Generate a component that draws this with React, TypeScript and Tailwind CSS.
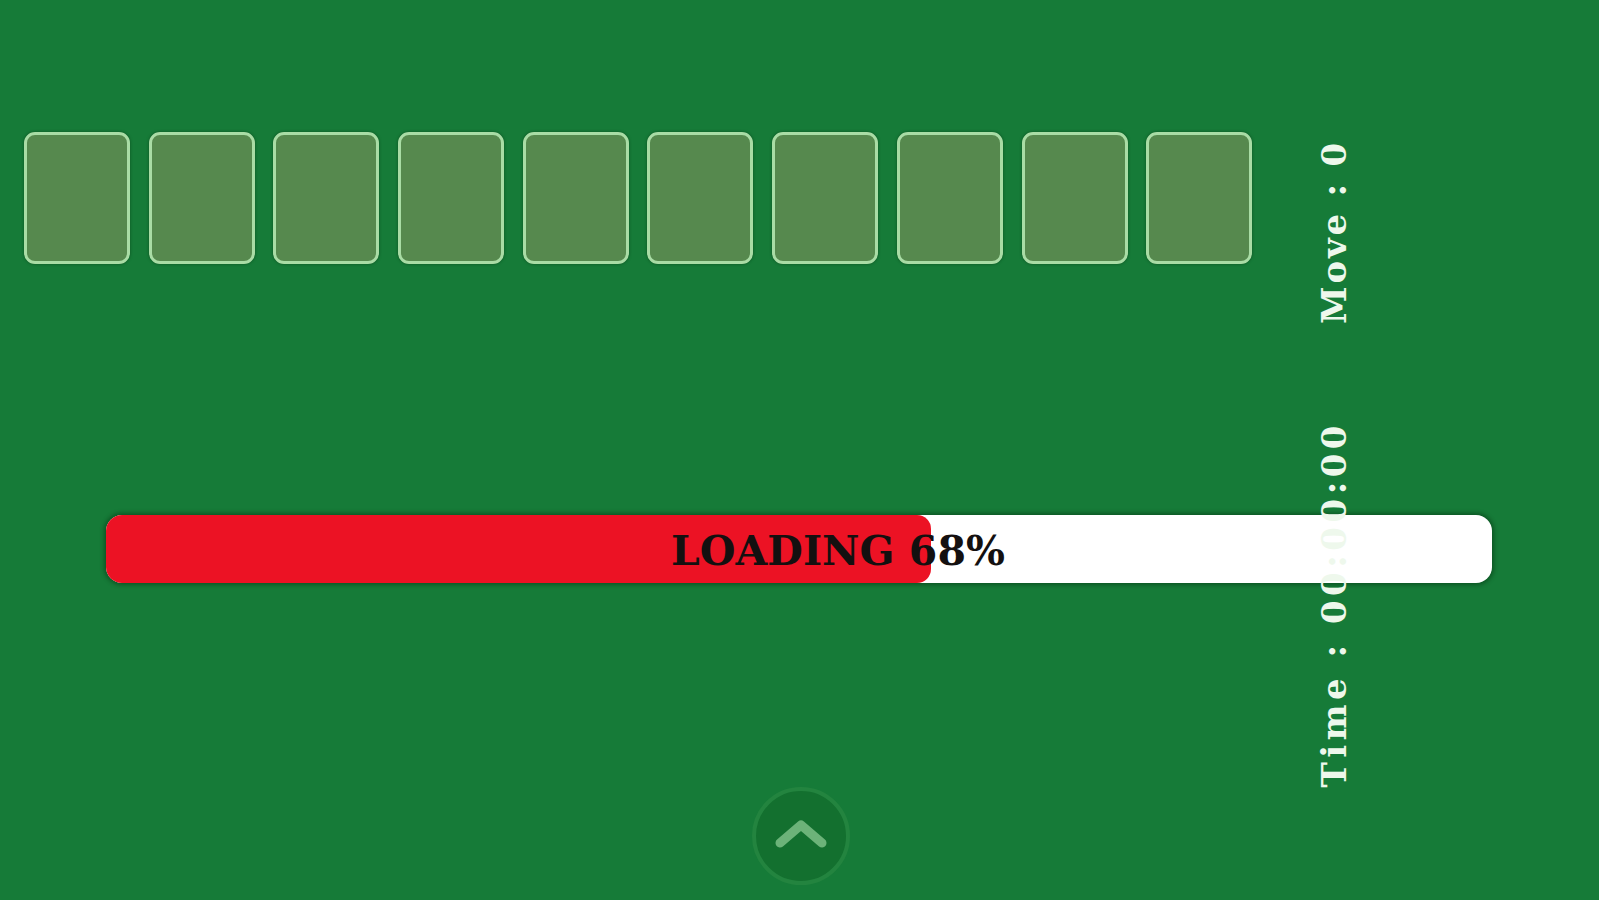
import React from "react";

const cards = Array.from({ length: 10 }, (_, i) => i);

export default function App() {
  return (
    <div
      className="relative h-[900px] w-[1599px] overflow-hidden bg-[#167b38]"
      style={{ fontFamily: '"DejaVu Serif", "Liberation Serif", serif' }}
    >
      <div className="flex gap-[18.7px] pl-[24px] pt-[132px]">
        {cards.map((i) => (
          <div
            key={i}
            className="h-[132px] w-[106px] rounded-[11px] border-[3px] border-[#a9dca5] bg-[#56894e] shadow-[0_0_3px_rgba(0,40,10,0.5)]"
          />
        ))}
      </div>

      <div className="relative ml-[106px] mt-[251px] h-[68px] w-[1386px] overflow-hidden rounded-[16px] bg-white shadow-[0_0_4px_2px_rgba(0,40,10,0.45)]">
        <div className="h-full w-[825px] rounded-r-[14px] bg-[#ec1224]" />
        <div className="absolute left-[565px] top-[2px] flex h-full items-center text-[41px] font-bold leading-none text-[#141010]">
          LOADING 68%
        </div>
      </div>

      <div className="ml-[752px] mt-[204px] flex h-[98px] w-[98px] items-center justify-center rounded-full border-[4px] border-[#23843f] bg-[#13702f]">
        <svg width="54" height="32" viewBox="0 0 54 32" className="mb-[6px]">
          <path
            d="M6 26 L27 8 L48 26"
            fill="none"
            stroke="#6cb379"
            strokeWidth="9"
            strokeLinecap="round"
            strokeLinejoin="round"
          />
        </svg>
      </div>

      <div className="absolute left-[1317px] top-[140px] rotate-180 text-[34px] font-bold leading-none tracking-[2.8px] text-[#eef8ec] [writing-mode:vertical-rl]">
        Move : 0
      </div>
      <div className="absolute left-[1317px] top-[421px] rotate-180 text-[34px] font-bold leading-none tracking-[4.5px] text-[#eef8ec] [writing-mode:vertical-rl]">
        Time : 00:00:00
      </div>
    </div>
  );
}
